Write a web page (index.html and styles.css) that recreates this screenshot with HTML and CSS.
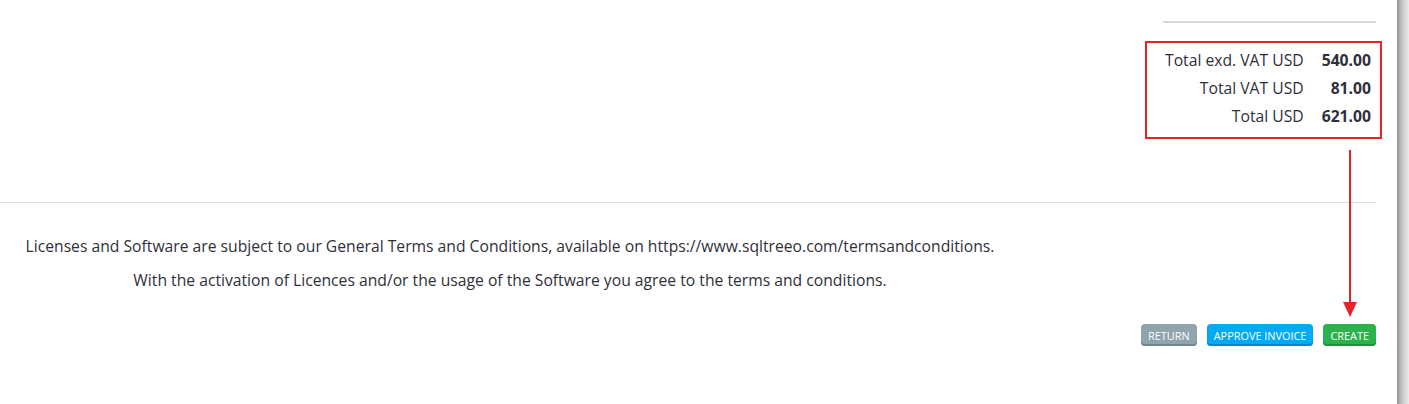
FILE: index.html
```html
<!DOCTYPE html>
<html lang="en">
  <head>
    <meta charset="UTF-8" />
    <meta name="viewport" content="width=device-width, initial-scale=1.0" />
    <title>Invoice</title>
    <link rel="stylesheet" href="styles.css">
  </head>
  <body>
    <div class="page">
      <div class="totals">
        <div class="totals-rule"></div>
        <div class="totals-box">
          <span class="label">Total exd. VAT USD</span>
          <span class="value">540.00</span>
          <span class="label">Total VAT USD</span>
          <span class="value">81.00</span>
          <span class="label">Total USD</span>
          <span class="value">621.00</span>
        </div>
      </div>

      <hr class="divider">

      <div class="terms">
        <p>Licenses and Software are subject to our General Terms and Conditions, available on https://www.sqltreeo.com/termsandconditions.</p>
        <p>With the activation of Licences and/or the usage of the Software you agree to the terms and conditions.</p>
      </div>

      <div class="actions">
        <button class="btn btn-return">RETURN</button>
        <button class="btn btn-approve">APPROVE INVOICE</button>
        <button class="btn btn-create">CREATE</button>
      </div>

      <!-- annotation arrow -->
      <svg class="arrow" width="14" height="167" viewBox="0 0 14 167">
        <rect x="6" y="0" width="2" height="154" fill="#e8212b" />
        <polygon points="0,152 14,152 7,167" fill="#e8212b" />
      </svg>
    </div>
    <div class="edge"></div>
  </body>
</html>
```

FILE: styles.css
```css
body {
  margin: 0;
  font-family: "Open Sans", "Liberation Sans", sans-serif;
  color: #2f2f3a;
  background: #fff;
  display: flex;
  min-height: 404px;
}
.page {
  position: relative;
  flex: 1;
  padding-right: 21px;
}
.edge {
  width: 12px;
  background: linear-gradient(to right, #8f8f8f, #c4c4c4 40%, #ececec);
}
.totals {
  display: flex;
  flex-direction: column;
  align-items: flex-end;
  padding-top: 21px;
}
.totals-rule {
  width: 213px;
  height: 2px;
  background: #d8d8d8;
}
.totals-box {
  box-sizing: border-box;
  width: 237px;
  margin-top: 18px;
  margin-right: -6px;
  border: 2px solid #e8212b;
  padding: 3px 9px 7px 10px;
  display: grid;
  grid-template-columns: 1fr auto;
  column-gap: 18px;
  font-size: 15.7px;
  line-height: 28px;
}
.label {
  text-align: right;
}
.value {
  text-align: right;
  font-weight: bold;
}
.divider {
  margin: 63px 0 0;
  border: none;
  border-top: 1px solid #ddd;
}
.terms {
  width: 1020px;
  margin-top: 26px;
  text-align: center;
  font-size: 15.7px;
}
.terms p {
  margin: 0;
  line-height: 34px;
}
.actions {
  display: flex;
  justify-content: flex-end;
  gap: 10px;
  margin-top: 27px;
}
.btn {
  font-family: "Open Sans", "Liberation Sans", sans-serif;
  font-size: 10.9px;
  color: #fff;
  border: none;
  border-radius: 4px;
  height: 22px;
  padding: 0 7px;
  line-height: 21px;
  cursor: pointer;
}
.btn-return {
  background: #90a4ae;
  box-shadow: inset 0 -2px 0 #6f858f;
}
.btn-approve {
  background: #03a9f4;
  box-shadow: inset 0 -2px 0 #0288c9;
}
.btn-create {
  background: #2bb24c;
  box-shadow: inset 0 -2px 0 #21913b;
}
.arrow {
  position: absolute;
  left: 1343px;
  top: 150px;
}
```
